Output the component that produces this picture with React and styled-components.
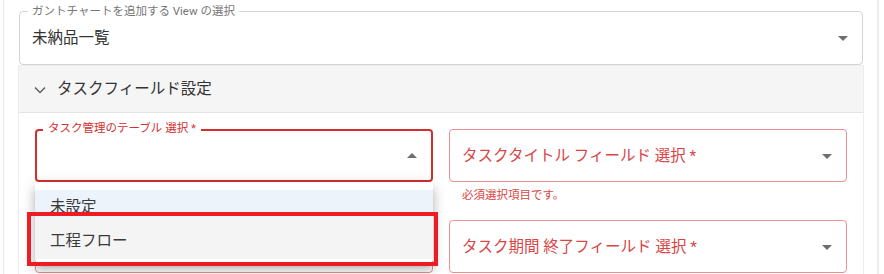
import React from 'react';
import styled, { createGlobalStyle } from 'styled-components';

const GlobalStyle = createGlobalStyle`
  html, body {
    margin: 0;
    padding: 0;
    background: #ffffff;
    overflow: hidden;
  }
  body {
    font-family: 'Roboto', 'Noto Sans CJK JP', sans-serif;
  }
`

const tones = {
  idle: { border: '1px solid #d4d4d4', text: '#333333', label: '#767676' },
  focused: { border: '2px solid #d32f2f', text: '#333333', label: '#d32f2f' },
  error: { border: '1px solid #ec9090', text: '#d94545', label: '#d94545' },
}

const Page = styled.div`
  position: relative;
  width: 884px;
  height: 274px;
`

const Panel = styled.div`
  margin-left: 3px;
  width: 876px;
  min-height: 274px;
  box-sizing: border-box;
  border-left: 1px solid #e9e9e9;
  border-right: 2px solid #ececec;
  padding: 11px 14px 0 15px;
`

const SelectBox = styled.div`
  position: relative;
  display: flex;
  align-items: center;
  box-sizing: border-box;
  height: ${p => p.$h}px;
  border: ${p => tones[p.$tone].border};
  border-radius: 4px;
  padding: 0 36px 0 ${p => (p.$tone === 'focused' ? 11 : 12)}px;
  background: #ffffff;
`

const FloatLabel = styled.span`
  position: absolute;
  top: ${p => p.$top}px;
  left: ${p => p.$left}px;
  padding: 0 ${p => p.$pad}px;
  background: #ffffff;
  font-size: 11.5px;
  line-height: 14px;
  color: ${p => tones[p.$tone].label};
  white-space: nowrap;
`

const Value = styled.span`
  font-size: 15.5px;
  line-height: 24px;
  color: ${p => tones[p.$tone].text};
  white-space: nowrap;
`

const Arrow = styled.svg`
  position: absolute;
  right: 7px;
  top: 50%;
  width: 24px;
  height: 24px;
  margin-top: -12px;
  fill: #6e6e6e;
`

const Accordion = styled.div`
  margin-top: 1px;
  box-shadow: 0 0 0 1px #ededed;
  background: #ffffff;
`

const AccordionHeader = styled.div`
  display: flex;
  align-items: center;
  gap: 11px;
  height: 46px;
  padding-left: 15px;
  background: #f5f5f5;
  border-bottom: 1px solid #e4e4e4;
`

const Chevron = styled.svg`
  width: 12px;
  height: 8px;
  margin-top: 2px;
  fill: none;
  stroke: #5f5f5f;
  stroke-width: 1.5;
`

const HeaderText = styled.span`
  font-size: 15.5px;
  line-height: 24px;
  color: #333333;
`

const AccordionBody = styled.div`
  padding: 16px;
`

const FieldGrid = styled.div`
  display: grid;
  grid-template-columns: 1fr 1fr;
  column-gap: 16px;
  row-gap: 15px;
  align-items: start;
`

const FieldCell = styled.div`
  position: relative;
  z-index: ${p => (p.$open ? 2 : 1)};
`

const Helper = styled.div`
  margin: 3px 0 0 13px;
  font-size: 11.5px;
  line-height: 20px;
  color: #d94545;
`

const Menu = styled.div`
  position: absolute;
  left: 0;
  right: 0;
  top: 53px;
  padding: 8px 0 4px;
  background: #ffffff;
  border-radius: 4px;
  box-shadow: 0 5px 5px -3px rgba(0, 0, 0, 0.2), 0 8px 10px 1px rgba(0, 0, 0, 0.14),
    0 3px 14px 2px rgba(0, 0, 0, 0.12);
`

const MenuItem = styled.div`
  box-sizing: border-box;
  height: ${p => p.$h}px;
  padding: ${p => p.$pt}px 15px 0;
  font-size: 15.5px;
  line-height: 24px;
  color: #3a3a3a;
  background: ${p => (p.$selected ? '#edf3fa' : p.$hover ? '#f4f4f4' : '#ffffff')};
`

const Annotation = styled.div`
  position: absolute;
  left: 27px;
  top: 212px;
  width: 411px;
  height: 54px;
  box-sizing: border-box;
  border: 4px solid #ed1c24;
  z-index: 5;
  pointer-events: none;
`

const DropDown = () => (
  <Arrow viewBox="0 0 24 24"><path d="M7 10l5 5 5-5z" /></Arrow>
)

const DropUp = () => (
  <Arrow viewBox="0 0 24 24"><path d="M7 14l5-5 5 5z" /></Arrow>
)

const App = () => (
  <Page>
    <GlobalStyle />
    <Panel>
      <SelectBox $h={54} $tone="idle">
        <FloatLabel $tone="idle" $top={-8} $left={8} $pad={4}>
          ガントチャートを追加する View の選択
        </FloatLabel>
        <Value $tone="idle">未納品一覧</Value>
        <DropDown />
      </SelectBox>

      <Accordion>
        <AccordionHeader>
          <Chevron viewBox="0 0 12 8"><polyline points="1,1.5 6,6.5 11,1.5" /></Chevron>
          <HeaderText>タスクフィールド設定</HeaderText>
        </AccordionHeader>
        <AccordionBody>
          <FieldGrid>
            <FieldCell $open>
              <SelectBox $h={53} $tone="focused">
                <FloatLabel $tone="focused" $top={-10} $left={6} $pad={5}>
                  タスク管理のテーブル 選択 *
                </FloatLabel>
                <DropUp />
              </SelectBox>
              <Menu>
                <MenuItem $h={27} $pt={5} $selected>未設定</MenuItem>
                <MenuItem $h={42} $pt={12} $hover>工程フロー</MenuItem>
              </Menu>
            </FieldCell>
            <FieldCell>
              <SelectBox $h={53} $tone="error">
                <Value $tone="error">タスクタイトル フィールド 選択 *</Value>
                <DropDown />
              </SelectBox>
              <Helper>必須選択項目です。</Helper>
            </FieldCell>
            <FieldCell>
              <SelectBox $h={53} $tone="error">
                <Value $tone="error">タスク期間 開始フィールド 選択 *</Value>
                <DropDown />
              </SelectBox>
            </FieldCell>
            <FieldCell>
              <SelectBox $h={53} $tone="error">
                <Value $tone="error">タスク期間 終了フィールド 選択 *</Value>
                <DropDown />
              </SelectBox>
            </FieldCell>
          </FieldGrid>
        </AccordionBody>
      </Accordion>
    </Panel>
    <Annotation />
  </Page>
)

export default App;
